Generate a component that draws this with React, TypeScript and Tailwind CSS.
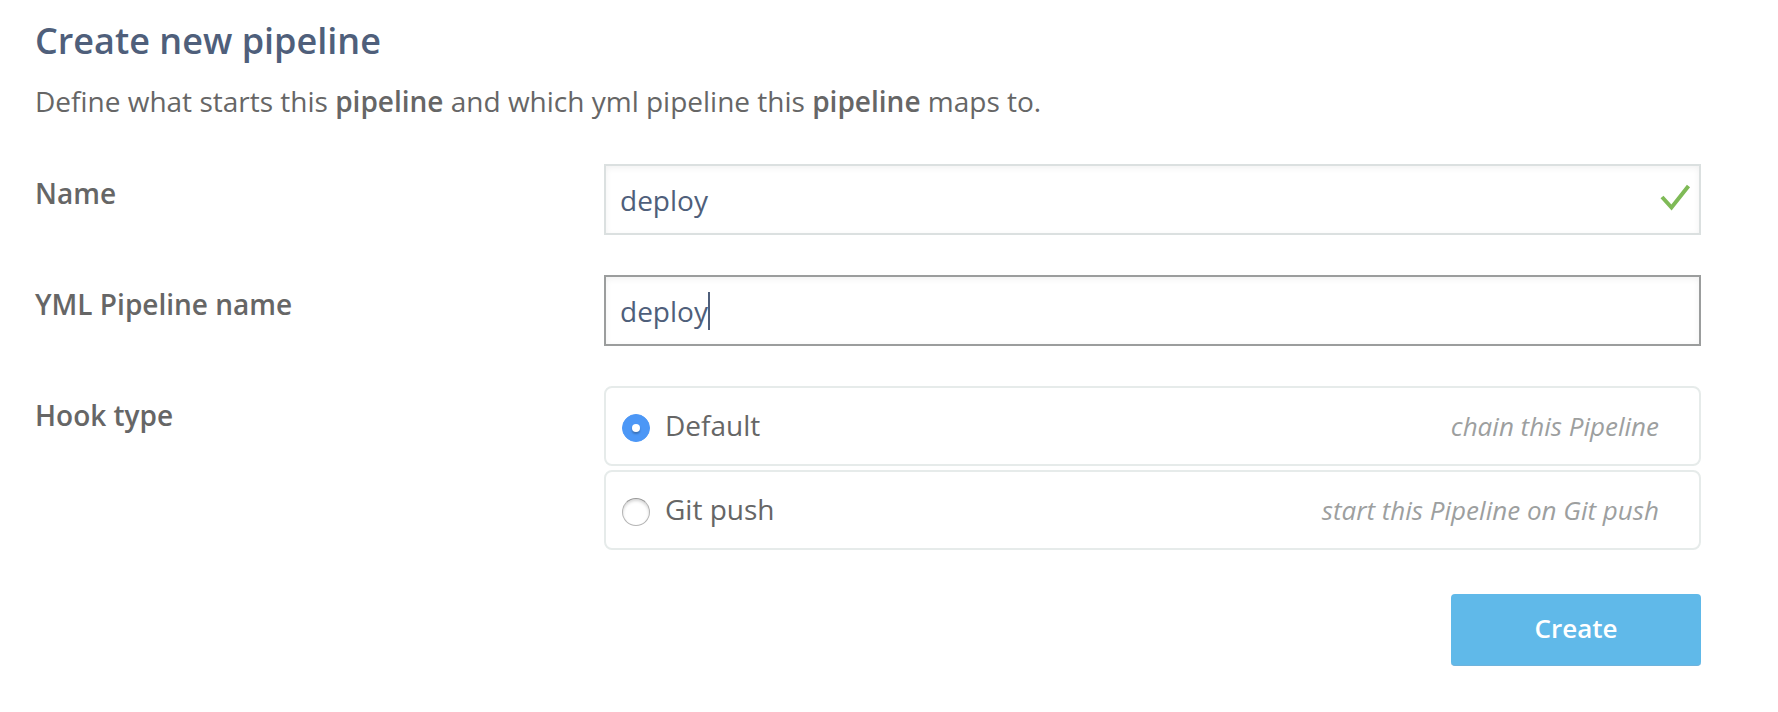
import { useState } from "react";
import type { ReactNode } from "react";

const ROW = "grid grid-cols-[minmax(0,569fr)_minmax(0,1097fr)]";
const LABEL = "pt-[9px] text-[28px] leading-10 font-semibold text-[#666666]";
const INPUT =
  "block h-[71px] w-full border-2 bg-white px-[14px] text-[28px] text-[#4f5f7b] shadow-[inset_0_2px_6px_rgba(0,0,0,0.06)] outline-none";

const HOOKS = [
  { id: "default", title: "Default", hint: "chain this Pipeline" },
  { id: "git-push", title: "Git push", hint: "start this Pipeline on Git push" },
];

function Field({ id, label, children }: { id: string; label: string; children: ReactNode }) {
  return (
    <div className={ROW}>
      <label htmlFor={id} className={LABEL}>
        {label}
      </label>
      <div className="relative">{children}</div>
    </div>
  );
}

export default function App() {
  const [name, setName] = useState("deploy");
  const [ymlName, setYmlName] = useState("deploy");
  const [hook, setHook] = useState("default");

  return (
    <main className="bg-white pt-[17px] pr-[77px] pb-11 pl-[35px] font-['Open_Sans',sans-serif] text-[#666666]">
      <h1 className="text-[36px] leading-[48px] font-semibold text-[#4f5f7b]">Create new pipeline</h1>
      <p className="mt-4 text-[28px] leading-10">
        Define what starts this <strong className="font-semibold">pipeline</strong> and which yml pipeline this{" "}
        <strong className="font-semibold">pipeline</strong> maps to.
      </p>

      <form className="mt-[43px] flex flex-col gap-10" onSubmit={(e) => e.preventDefault()}>
        <Field id="name" label="Name">
          <input
            id="name"
            type="text"
            value={name}
            onChange={(e) => setName(e.target.value)}
            className={`${INPUT} border-[#dbe0e0]`}
          />
          <svg
            className="pointer-events-none absolute top-5 right-[10px] h-8 w-8"
            viewBox="0 0 32 32"
            fill="none"
            stroke="#7fba57"
            strokeWidth="4"
            aria-hidden="true"
          >
            <path d="M3 13 L12.5 23.5 L29.5 2" />
          </svg>
        </Field>

        <Field id="yml-name" label="YML Pipeline name">
          <input
            id="yml-name"
            type="text"
            value={ymlName}
            onChange={(e) => setYmlName(e.target.value)}
            className={`${INPUT} border-[#9b9d9d]`}
          />
          <span className="pointer-events-none absolute top-[17px] left-[104px] h-[38px] w-[2px] bg-[#4f5f7b]" />
        </Field>

        <div className={ROW} role="radiogroup" aria-labelledby="hook-type">
          <span id="hook-type" className={LABEL}>
            Hook type
          </span>
          <div className="flex flex-col gap-1">
            {HOOKS.map((h) => (
              <label
                key={h.id}
                className="flex h-20 items-center rounded-lg border-2 border-[#e6ebea] pr-10 pl-4"
              >
                <input
                  type="radio"
                  name="hook"
                  value={h.id}
                  checked={hook === h.id}
                  onChange={() => setHook(h.id)}
                  className="mt-1 grid size-7 shrink-0 appearance-none place-items-center rounded-full border border-[#b5b5b5] border-t-[#999999] bg-white shadow-[inset_0_2px_3px_rgba(0,0,0,0.16)] checked:border-[#4c97f6] checked:bg-[#4c97f6] checked:shadow-none checked:before:size-2 checked:before:rounded-full checked:before:bg-white checked:before:shadow-[0_2px_2px_rgba(0,0,0,0.25)] checked:before:content-['']"
                />
                <span className="ml-[15px] pb-[2px] text-[28px] leading-10">{h.title}</span>
                <em className="ml-auto text-[26px] leading-10 text-[#9d9f9f]">{h.hint}</em>
              </label>
            ))}
          </div>
        </div>

        <button
          type="submit"
          className="mt-1 h-[72px] w-[250px] self-end rounded border-b border-[#6fb3dc] bg-[#60b9e9] pb-[2px] text-[26px] font-semibold text-white"
        >
          Create
        </button>
      </form>
    </main>
  );
}
